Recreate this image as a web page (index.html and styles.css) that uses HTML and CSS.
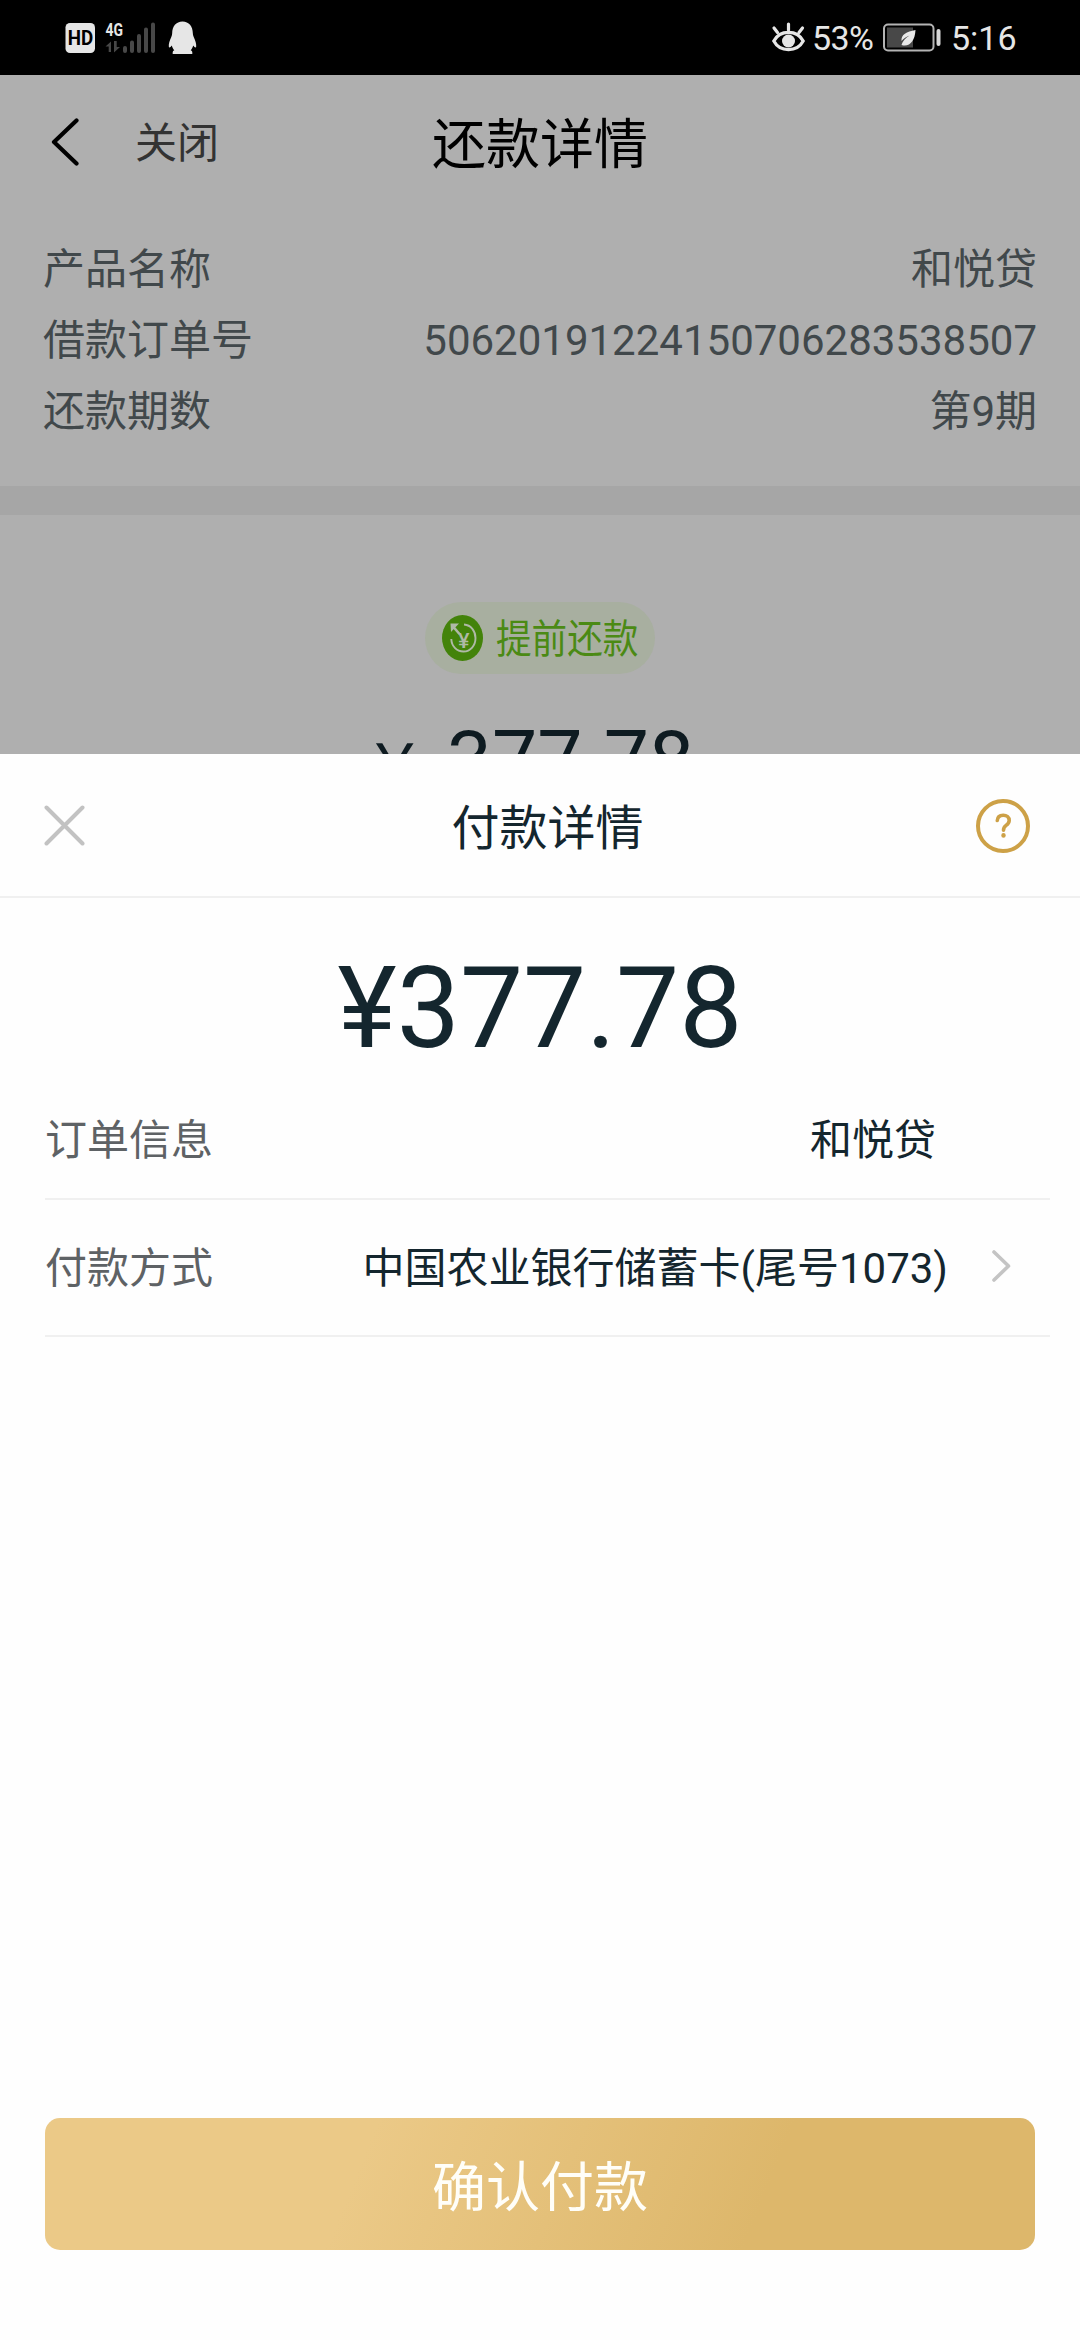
FILE: index.html
```html
<!DOCTYPE html>
<html lang="zh-CN">
<head>
<meta charset="utf-8">
<title>付款详情</title>
<link rel="stylesheet" href="styles.css">
</head>
<body>
<div class="screen">
  <header class="status">
    <svg class="status-left" width="140" height="40" viewBox="0 0 140 40">
      <rect x="0.5" y="3" width="29.5" height="30" rx="4.5" fill="#e6e6e6"/>
      <text class="hd" x="2.7" y="25" textLength="25.5" lengthAdjust="spacingAndGlyphs">HD</text>
      <text class="net" x="40.5" y="15.5" textLength="17.5" lengthAdjust="spacingAndGlyphs">4G</text>
      <path d="M46 21.5V32h-2.300v-5.500h-3.200zM49 21v11.500l6-5.500h-3.300v-6z" fill="#484848"/>
      <path d="M60 28v3M67 22.500v8.500M74 16v15M81 9.500v21.500M88 4.500v26.500" stroke="#484848" stroke-width="4" stroke-linecap="round"/>
      <path d="M117.500 1.500c-6.500 0-10.300 5-10.300 11.500 0 1.300-.3 2.700-.9 4-1.800 3.600-2.700 7-2.500 9.500.1 1.600 1.600 1 3-1 .4 1.800 1.300 3.500 2.500 4.800-1.400.6-1.800 1.700-1.600 3.700h19.600c.2-2-.2-3.100-1.600-3.700 1.200-1.300 2.100-3 2.500-4.800 1.400 2 2.900 2.600 3 1 .2-2.500-.7-5.900-2.500-9.500-.6-1.300-.9-2.700-.9-4 0-6.500-3.800-11.500-10.300-11.500z" fill="#e6e6e6"/>
    </svg>
    <div class="status-right">
      <svg class="eye" width="36" height="34" viewBox="0 0 36 34">
        <g fill="none" stroke="#e6e6e6" stroke-width="3.200" stroke-linecap="round">
          <path d="M2.800 20C9 8.500 26 8.500 32.200 20 26 31.500 9 31.500 2.800 20z"/>
          <path d="M17.500 3v6M3 7l3.500 4.500M31.500 7L28 11.500"/>
        </g>
        <circle cx="17.500" cy="20" r="6.500" fill="#e6e6e6"/>
      </svg>
      <span class="pct">53%</span>
      <svg class="battery" width="60" height="30" viewBox="0 0 60 30">
        <rect x="1" y="1.500" width="49.500" height="26" rx="4" fill="none" stroke="#b4b4b4" stroke-width="2"/>
        <rect x="4" y="4.500" width="26" height="20" fill="#484848"/>
        <rect x="53.500" y="6" width="4" height="17" rx="2" fill="#d8d8d8"/>
        <path d="M32.500 7c-9 1.500-14.500 4.500-14 11 2-2.500 5-4.500 8-5.500-4 2.500-7 5.500-8 9.500 8 2.500 13.500-4 14-15z" fill="#e8e8e8"/>
      </svg>
      <span class="clock">5:16</span>
    </div>
  </header>

  <main class="page">
    <nav class="nav">
      <div class="nav-left">
        <svg width="30" height="48" viewBox="0 0 30 48"><path d="M26.500 2.500L4 24l22.500 21.500" fill="none" stroke="#000" stroke-width="4.200" stroke-linecap="round" stroke-linejoin="round"/></svg>
        <span class="nav-close">关闭</span>
      </div>
      <h1 class="nav-title">还款详情</h1>
    </nav>
    <dl class="facts">
      <div class="fact"><dt>产品名称</dt><dd>和悦贷</dd></div>
      <div class="fact"><dt>借款订单号</dt><dd>50620191224150706283538507</dd></div>
      <div class="fact"><dt>还款期数</dt><dd>第9期</dd></div>
    </dl>
    <div class="band"></div>
    <section class="repay">
      <div class="pill">
        <svg class="pill-icon" width="41" height="46" viewBox="0 0 41 46">
          <ellipse cx="20.500" cy="23" rx="20.500" ry="23" fill="#43830a"/>
          <g fill="none" stroke="#afb9a6" stroke-width="1.900">
            <path d="M22 9.500C29 10 33.500 16 33.500 23 33.500 30.500 28.500 36.500 21.500 36.500S9.500 31 9.300 24"/>
            <path d="M11 11.500l6.500 7.500" stroke-width="2.600"/>
          </g>
          <path d="M8.500 8.500h8.500l-8 8.500z" fill="#afb9a6"/>
          <text class="pill-yen" x="16" y="33" textLength="11.500" lengthAdjust="spacingAndGlyphs">¥</text>
        </svg>
        <span class="pill-text">提前还款</span>
      </div>
      <div class="due"><span class="due-yen">￥</span><span>377.78</span></div>
    </section>
  </main>

  <section class="sheet">
    <div class="sheet-head">
      <svg width="41" height="41" viewBox="0 0 41 41"><path d="M2.500 2.500l36 36M38.500 2.500l-36 36" fill="none" stroke="#c2c2c2" stroke-width="4" stroke-linecap="round"/></svg>
      <h2 class="sheet-title">付款详情</h2>
      <svg class="help" width="56" height="56" viewBox="0 0 56 56" fill="none" stroke="#cda147" stroke-linecap="round">
        <circle cx="28" cy="28" r="25" stroke-width="4"/>
        <path d="M22.300 22.500c.2-3.400 2.500-5.300 5.900-5.300 3.500 0 6 2.100 6 5.200 0 2.500-1.400 3.700-3.100 5-1.900 1.400-2.600 2.400-2.600 4.900" stroke-width="3.600"/>
        <path d="M28.500 37.300v.2" stroke-width="4.400"/>
      </svg>
    </div>
    <div class="amount">¥377.78</div>
    <div class="rows">
      <div class="row row-order"><span class="label">订单信息</span><span class="value">和悦贷</span></div>
      <div class="row row-method"><span class="label">付款方式</span><span class="value">中国农业银行储蓄卡(尾号1073)</span>
        <svg class="more" width="21" height="34" viewBox="0 0 21 34"><path d="M3 3l14.500 14L3 31" fill="none" stroke="#c4c4c4" stroke-width="3.600" stroke-linecap="round" stroke-linejoin="round"/></svg>
      </div>
    </div>
    <button class="confirm" type="button">确认付款</button>
  </section>
</div>
</body>
</html>
```

FILE: styles.css
```css
* { box-sizing: border-box; }
body {
  margin: 0;
  font-family: Roboto, "Noto Sans CJK SC", sans-serif;
  background: #fefefe;
}
svg { display: block; flex: none; }
h1, h2, dl, dt, dd { margin: 0; font-weight: 400; }
.screen {
  width: 1080px;
  height: 2340px;
  display: flex;
  flex-direction: column;
  overflow: hidden;
}

.status {
  height: 75px;
  flex: none;
  display: flex;
  justify-content: space-between;
  background: #000;
  color: #e6e6e6;
  padding: 20px 64px 0 65px;
}
.hd { font: 700 20.500px Roboto, sans-serif; fill: #000; }
.net { font: 700 19px Roboto, sans-serif; fill: #e6e6e6; }
.status-right { display: flex; font-size: 34px; line-height: 36px; }
.eye { margin-top: 1px; }
.pct { width: 64px; margin-left: 5px; letter-spacing: -0.6px; }
.battery { margin: 3px 0 0 7px; }
.clock { width: 65px; margin-left: 8px; }

.page {
  height: 679px;
  flex: none;
  overflow: hidden;
  background: #afafaf;
}
.nav {
  height: 134px;
  display: grid;
  grid-template-columns: 1fr auto 1fr;
  align-items: center;
  padding: 0 50px;
}
.nav-left { display: flex; align-items: center; gap: 55px; }
.nav-close { font-size: 42px; line-height: 60px; padding-top: 3px; color: #333; }
.nav-title { font-size: 54px; line-height: 78px; padding-top: 7px; color: #000; }
.facts { padding: 25px 43px 0 43px; height: 277px; }
.fact {
  display: flex;
  justify-content: space-between;
  font-size: 42px;
  line-height: 71px;
  color: #41484b;
}
.band { height: 29px; background: #a6a6a6; }
.repay {
  display: flex;
  flex-direction: column;
  align-items: center;
  padding-top: 87px;
}
.pill {
  width: 230px;
  height: 72px;
  border-radius: 36px;
  background: #a8afa0;
  display: flex;
  align-items: center;
  padding-left: 17px;
}
.pill-yen { font: 500 21px Roboto, sans-serif; fill: #afb9a6; }
.pill-text {
  margin-left: 13px;
  padding-top: 3px;
  flex: none;
  font-size: 40px;
  line-height: 58px;
  color: #4b8a14;
  transform: scaleX(.89);
  transform-origin: left center;
}
.due {
  display: flex;
  align-items: baseline;
  gap: 22px;
  margin: 38px 21px 0 0;
  font-size: 80.500px;
  line-height: 95px;
  color: #0e1b21;
}
.due-yen { font-size: 60px; line-height: 60px; }

.sheet {
  flex: 1;
  display: flex;
  flex-direction: column;
  background: #fefefe;
  color: #14262e;
}
.sheet-head {
  height: 144px;
  display: grid;
  grid-template-columns: 1fr auto 1fr;
  align-items: center;
  padding: 0 49px 0 44px;
  border-bottom: 2px solid #f0f0f0;
}
.help { justify-self: end; margin-top: 2px; }
.sheet-title { font-size: 48px; line-height: 70px; padding: 7px 0 0 14px; margin-right: -6px; }
.amount {
  font-size: 112.500px;
  line-height: 132px;
  text-align: center;
  margin-top: 45px;
}
.rows { margin: -3px 30px 0 45px; }
.row {
  display: flex;
  align-items: center;
  font-size: 42px;
  line-height: 60px;
  border-bottom: 2px solid #f0f0f0;
}
.row-order { height: 128px; padding: 12px 114px 0 0; }
.row-method { height: 137px; padding: 3px 38px 0 0; }
.label { color: #5e6265; }
.value { margin-left: auto; }
.more { margin: 0 0 6px 43px; }
.confirm {
  margin: auto 45px 90px;
  height: 132px;
  border: 0;
  border-radius: 15px;
  flex: none;
  font: inherit;
  font-size: 54px;
  padding: 0 0 2px;
  color: #fffef8;
  background: linear-gradient(112deg, #ebc987 32%, #ddb76b 72%);
}
```
